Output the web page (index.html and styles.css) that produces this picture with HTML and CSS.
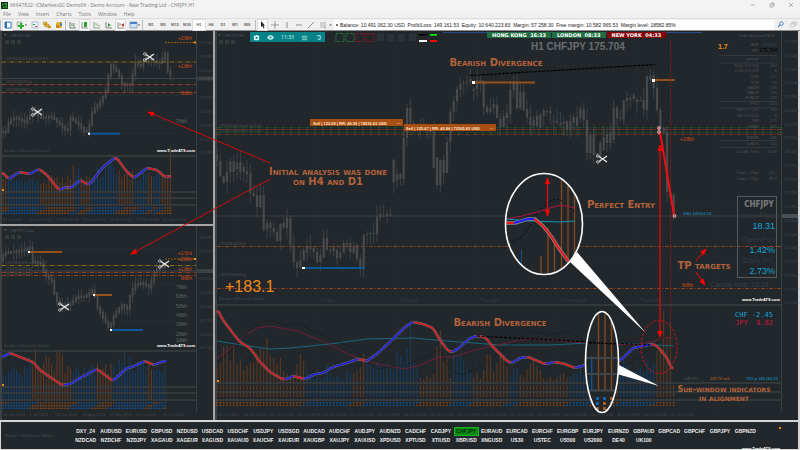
FILE: index.html
```html
<!DOCTYPE html>
<html lang="en">
	<head>
		<meta charset="utf-8">
		<title>66647822: ICMarketsSC-Demo06 - Demo Account</title>
		<link rel="stylesheet" href="styles.css">
	</head>
	<body>
		<header>
			<div class="titlebar">
				<svg class="logo" viewBox="0 0 8 8"><rect width="8" height="8" fill="#102a14"/><path d="M1 2h2v2H1zM4 1h3v2H4zM2 5h2v2H2zM5 4h2v3H5z" fill="#2fae3a"/></svg>
				<span class="title">66647822: ICMarketsSC-Demo06 - Demo Account - Raw Trading Ltd - CHFJPY,H1</span>
				<button aria-label="Minimize"><svg viewBox="0 0 6 6"><path d="M1 3h4"/></svg></button>
				<button aria-label="Restore"><svg viewBox="0 0 6 6"><path d="M1 2h3v3H1zM2 1h3v3"/></svg></button>
				<button aria-label="Close"><svg viewBox="0 0 6 6"><path d="M1 1l4 4M5 1L1 5"/></svg></button>
			</div>
			<nav class="menu">
				<button>File</button>
				<button>View</button>
				<button>Insert</button>
				<button>Charts</button>
				<button>Tools</button>
				<button>Window</button>
				<button>Help</button>
			</nav>
			<div class="toolbar">
				<div class="group icons">
					<button class="on" aria-label="Market watch"><svg viewBox="0 0 8 8"><path d="M1 1h6v6H1z" fill="#fff" stroke="#2c6fb5"/><path d="M1 1h2v6H1z" fill="#2c6fb5"/></svg></button>
					<button class="wide" aria-label="New chart"><svg viewBox="0 0 11 8"><path d="M1 1h5v4H1z" fill="#dfe9e0" stroke="#777" stroke-width=".5"/><path d="M2 4h2V2h2v2h2v2H6v2H4V6H2z" fill="#27b32e"/><path d="M9 3.500h2l-1 1.500z" fill="#333"/></svg></button>
					<button aria-label="Profiles"><svg viewBox="0 0 8 8"><path d="M1 1h6v6H1z" fill="#e8f3fb" stroke="#86aacb" stroke-width=".6"/><path d="M2 3h2v1H2z" fill="#2a9a36"/><path d="M4 5h2v1H4z" fill="#d44"/></svg></button>
					<button aria-label="Open folder"><svg viewBox="0 0 8 8"><path d="M0 1h4v3H0zM2 3h4v3H2zM5 5h3v2H5z" fill="#e0b23a" stroke="#a87c1c" stroke-width=".4"/></svg></button>
					<button aria-label="Terminal"><svg viewBox="0 0 8 8"><path d="M1 2l2-1h4v5L6 7H1z" fill="#e5a92c"/><path d="M1 4h3v3H1z" fill="#c8851c"/><path d="M5 2h2v3H5z" fill="#4a82c4"/></svg></button>
				</div>
				<div class="group icons">
					<button aria-label="Bars"><svg viewBox="0 0 8 8"><path d="M1 1v6h6M3 5V2M5 6V2" fill="none" stroke="#47704d" stroke-width=".8"/></svg></button>
					<button class="on" aria-label="Candles"><svg viewBox="0 0 8 8"><path d="M1 1v6h6" fill="none" stroke="#555" stroke-width=".7"/><path d="M3 1h3v5H3z" fill="#1fa52a"/></svg></button>
					<button aria-label="Line chart"><svg viewBox="0 0 8 8"><path d="M1 1v6h6M2 3c2-1 2 2 5 2" fill="none" stroke="#4b8a55" stroke-width=".7"/></svg></button>
					<button aria-label="Auto scroll"><svg viewBox="0 0 8 8"><path d="M1 1v6h6" fill="none" stroke="#555" stroke-width=".7"/><path d="M3 2l3 2-3 2z" fill="#35a040"/></svg></button>
					<button class="on" aria-label="Chart shift"><svg viewBox="0 0 8 8"><path d="M1 1v6h6M3 2v3" fill="none" stroke="#555" stroke-width=".7"/><path d="M7 2v4L4 4z" fill="#c0392b"/></svg></button>
					<button class="wide" aria-label="Template"><svg viewBox="0 0 11 8"><path d="M1 1h7v6H1z" fill="#cfe2f2" stroke="#5c88b0" stroke-width=".6"/><path d="M1 1h7v2H1z" fill="#4a82c4"/><path d="M9 3.500h2l-1 1.500z" fill="#333"/></svg></button>
				</div>
				<div class="group frames">
					<button>M1</button>
					<button>M5</button>
					<button>M15</button>
					<button>M30</button>
					<button class="on">H1</button>
					<button>H4</button>
					<button>D1</button>
					<button>W1</button>
					<button>MN</button>
				</div>
				<div class="group icons tools">
					<button class="on" aria-label="Cursor"><svg viewBox="0 0 8 8"><path d="M2 0l4 4.500H4.500l1 2.500-1 .5-1-2.500L2 6z" fill="#222"/></svg></button>
					<button aria-label="Crosshair"><svg viewBox="0 0 8 8"><path d="M4 0v8M0 4h8" stroke="#777" stroke-width=".7"/></svg></button>
					<button aria-label="Vertical line"><svg viewBox="0 0 8 8"><path d="M4 1v6" stroke="#777" stroke-width=".8"/></svg></button>
					<button aria-label="Horizontal line"><svg viewBox="0 0 8 8"><path d="M1 4h6" stroke="#777" stroke-width=".8"/></svg></button>
					<button aria-label="Trend line"><svg viewBox="0 0 8 8"><path d="M1 7l6-6" stroke="#777" stroke-width=".8"/></svg></button>
					<button aria-label="Fibonacci"><svg viewBox="0 0 8 8"><path d="M1 2h6M1 4h6M1 6h6M6 5v3" stroke="#999" stroke-width=".7"/></svg></button>
				</div>
				<div class="mark">×</div>
				<div class="account"><span class="dot"></span>Balance: 10 491 062.30 USD&nbsp; Profit/Loss: 149 161.53&nbsp; Equity: 10 640 223.83&nbsp; Margin: 57 258.30&nbsp; Free margin: 10 582 965.53&nbsp; Margin level: 18582.85%</div>
				<button class="end" aria-label="Search"><svg viewBox="0 0 8 8"><circle cx="5" cy="3" r="2" fill="none" stroke="#4373c4"/><path d="M3.500 4.500L1 7" stroke="#4373c4" stroke-width="1.200"/></svg></button>
				<button class="end" aria-label="Chat"><svg viewBox="0 0 10 8"><ellipse cx="6" cy="3" rx="3" ry="2" fill="#ddd" stroke="#aaa" stroke-width=".6"/><ellipse cx="4" cy="5" rx="3" ry="2" fill="#eee" stroke="#aaa" stroke-width=".6"/></svg></button>
			</div>
		</header>
		<main>
			<section class="pane h4"><svg id="h4" viewBox="0 31 213 193"></svg></section>
			<section class="pane d1"><svg id="d1" viewBox="0 226 213 194"></svg></section>
			<section class="pane h1">
				<svg id="h1" viewBox="215 31 585 389"></svg>
				<div class="recorder">
					<button aria-label="Camera"><svg viewBox="0 0 8 8"><path d="M1 2h2l.5-1h1.500L5.500 2H7v5H1z" fill="#dff"/><circle cx="4" cy="4.300" r="1.300" fill="#078286"/></svg></button>
					<button aria-label="Show"><svg viewBox="0 0 8 8"><path d="M0 4q4-5 8 0q-4 5-8 0z" fill="#dff"/><circle cx="4" cy="4" r="1.200" fill="#078286"/></svg></button>
					<span>11:33</span>
					<button aria-label="Menu"><svg viewBox="0 0 8 8"><path d="M1 2.500h6M1 4.500h6M1 6.500h6" stroke="#dff" stroke-width=".7"/></svg></button>
					<button aria-label="Dock"><svg viewBox="0 0 8 8"><path d="M2 2h4v4H3" fill="none" stroke="#dff" stroke-width=".9"/></svg></button>
				</div>
				<div class="sessions">
					<span>HONG KONG&nbsp; 16:33</span>
					<span>LONDON&nbsp; 08:33</span>
					<span class="closed">NEW YORK&nbsp; 04:33</span>
				</div>
			</section>
			<svg id="notes" viewBox="0 31 800 389"></svg>
		</main>
		<footer>
			<span class="maker">Beatle's Millionaire Maker</span>
			<div id="symbols"></div>
			<i class="led"></i>
			<a href="#">www.TradeATS.com</a>
		</footer>
		<script src="charts.js"></script>
	</body>
</html>
```
FILE: styles.css
```css
* {
	box-sizing: border-box;
}
body {
	display: flex;
	flex-direction: column;
	height: 100vh;
	margin: 0;
	overflow: hidden;
	background: #f0f0f0;
	color: #333;
	font: 5px "Open Sans", sans-serif;
}
button {
	padding: 0;
	border: 0;
	background: none;
	color: inherit;
	font: inherit;
}
svg {
	display: block;
}

/* window header */
header {
	flex: none;
	height: 31px;
	border-bottom: 1px solid #8c8c8c;
}
.titlebar {
	display: flex;
	align-items: center;
	height: 10px;
	padding: 0 0 0 1px;
	background: #f3f3f3;
	color: #777;
}
.logo {
	width: 7px;
	height: 7px;
	margin-right: 2px;
}
.title {
	flex: 1;
}
.titlebar button {
	width: 19px;
}
.titlebar button svg {
	width: 6px;
	margin: auto;
	fill: none;
	stroke: #888;
	stroke-width: 0.6;
}
.menu {
	display: flex;
	gap: 7px;
	height: 8px;
	padding-left: 3px;
	color: #777;
}
.toolbar {
	display: flex;
	align-items: center;
	height: 12px;
	border-top: 1px solid #ddd;
}
.group {
	display: flex;
	flex: none;
	align-items: center;
	height: 10px;
	padding: 0 2px;
	border-left: 1px solid #bbb;
}
.icons {
	gap: 3px;
}
.icons button {
	width: 9px;
	height: 10px;
}
.icons .wide {
	width: 12px;
}
.icons svg {
	height: 8px;
	margin: auto;
}
.toolbar .on {
	background: #fff;
	outline: 1px solid #dcdcdc;
}
.frames button {
	width: 12px;
	height: 10px;
	color: #666;
	font: bold 4px "Liberation Sans", sans-serif;
}
.tools {
	gap: 3px;
}
.mark {
	flex: none;
	width: 5px;
}
.account {
	flex: 1;
	min-width: 0;
	height: 10px;
	padding-left: 2px;
	overflow: hidden;
	background: #fff;
	color: #222;
	font: 5px/10px "Liberation Sans", sans-serif;
	white-space: nowrap;
}
.dot {
	display: inline-block;
	width: 2px;
	height: 2px;
	margin: 0 2px 1px 0;
	background: #777;
}
.end {
	flex: none;
	width: 13px;
}
.end svg {
	height: 7px;
	margin: auto;
}

/* charts */
main {
	position: relative;
	display: grid;
	flex: 1;
	grid-template-columns: 213fr 585fr;
	grid-template-rows: 193fr 194fr;
	gap: 2px;
	min-height: 0;
	background: #a5a5a5;
}
.pane {
	position: relative;
	min-height: 0;
	background: #22272b;
	border-left: 2px solid #3d4144;
}
.pane > svg {
	width: calc(100% + 2px);
	height: 100%;
	margin-left: -2px;
}
.h1 {
	grid-column: 2;
	grid-row: 1 / 3;
	border-right: 2px solid #d5d5d5;
}
.h1 > svg {
	width: calc(100% + 4px);
}
#notes {
	position: absolute;
	inset: 0;
	width: 100%;
	height: 100%;
	pointer-events: none;
}
main text {
	font-family: "Liberation Sans", sans-serif;
}
.recorder {
	position: absolute;
	top: 1px;
	left: 33px;
	display: flex;
	align-items: center;
	justify-content: space-around;
	width: 75px;
	height: 10px;
	background: #078286;
	color: #dff;
}
.recorder svg {
	width: 7px;
}
.sessions {
	position: absolute;
	top: 1px;
	left: 270px;
	display: flex;
	gap: 1px;
	color: #fff;
	font: bold 5px/6px "DejaVu Sans", sans-serif;
	text-align: center;
}
.sessions span {
	padding: 0 5px;
	background: #1f6f42;
}
.sessions .closed {
	background: #850006;
}
.dim {
	fill: #505458;
	font-size: 4px;
}
.faint {
	fill: #44494d;
	font-size: 4px;
}
.hot {
	fill: #d24a1c;
	font-size: 5px;
}
.callout {
	fill: #b3623b;
	font-size: 10px;
	font-weight: bold;
	font-variant: small-caps;
}
main .callout {
	font-family: "DejaVu Sans", sans-serif;
}
.callout.small {
	font-size: 8px;
}
.watermark {
	fill: #fff;
	font-size: 4px;
	font-weight: bold;
}
.middle {
	text-anchor: middle;
}
.right {
	text-anchor: end;
}
.heading {
	fill: #6a6d70;
	font-size: 10px;
	font-weight: bold;
}
.order {
	fill: #ffe8d0;
	font-size: 4px;
	font-weight: bold;
}
.pips {
	fill: #f28c13;
	font-size: 16px;
}
.spread {
	fill: #f28c13;
	font-size: 7px;
	font-weight: bold;
}
.pair {
	fill: #7c7f82;
	font-size: 8px;
	font-weight: bold;
}
main .pair {
	font-family: "Liberation Sans Narrow", "DejaVu Sans Condensed", sans-serif;
}
.cyan {
	fill: #12a5dc;
	font-size: 4px;
}
.digits {
	fill: #12a5dc;
	font-size: 9px;
}
main .mono {
	font-family: "DejaVu Sans Mono", monospace;
	font-size: 7px;
}

/* symbol list */
footer {
	position: relative;
	display: flex;
	flex: none;
	align-items: center;
	height: 30px;
	border: solid #d5d5d5;
	border-width: 2px 2px 1px 1px;
	background: #22272b;
	color: #eee;
}
.maker {
	width: 72px;
	padding-left: 4px;
	color: #3d4246;
	font: bold 4px "Liberation Sans", sans-serif;
}
#symbols {
	display: grid;
	grid-template-columns: repeat(27, 1fr);
	flex: 1;
	row-gap: 0;
	margin-right: 40px;
}
#symbols button {
	height: 9px;
	font: bold 5px "Liberation Sans", sans-serif;
}
#symbols .current {
	background: #0a8a12;
	outline: 1px solid #12b41c;
	outline-offset: -1px;
	color: #052a08;
}
.led {
	position: absolute;
	top: 5px;
	right: 17px;
	width: 2px;
	height: 2px;
	background: #f28c13;
}
footer a {
	position: absolute;
	right: 18px;
	bottom: -2px;
	color: #fff;
	font: bold 4px "Liberation Sans", sans-serif;
	text-decoration: none;
}
```
FILE: charts.js
```js
const UP = '#123f6b', DOWN = '#653a1e', BACK = '#22272b';

function rnd(n) {
	const v = Math.sin(n * 127.1 + 11.7) * 43758.5453;
	return v - Math.floor(v);
}
function line(x1, y1, x2, y2, color, width = 1, extra = '') {
	return `<line x1="${x1}" y1="${y1}" x2="${x2}" y2="${y2}" stroke="${color}" stroke-width="${width}" ${extra}/>`;
}
function rect(x, y, w, h, fill, extra = '') {
	return `<rect x="${x}" y="${y}" width="${w}" height="${h}" fill="${fill}" ${extra}/>`;
}
function text(x, y, str, cls) {
	return `<text x="${x}" y="${y}" class="${cls}">${str}</text>`;
}
function poly(points, color, width = 1, extra = '') {
	return `<polyline points="${points.join(' ')}" fill="none" stroke="${color}" stroke-width="${width}" stroke-linejoin="round" ${extra}/>`;
}
function at(points, x) {
	for (let i = 1; i < points.length; i++) {
		const [ax, ay] = points[i - 1], [bx, by] = points[i];
		if (x <= bx) return ay + (by - ay) * (x - ax) / (bx - ax);
	}
	return points[points.length - 1][1];
}
function candle(x, top, bottom, i, w, wick) {
	return line(x, top - rnd(i) * wick, x, bottom + rnd(i + 500) * wick, '#44484b', 0.8) +
		rect(x - w / 2, top, w, Math.max(1, bottom - top), '#484a4c');
}
// blue while the average rises, red while it falls
function average(points) {
	const curve = [];
	for (let x = points[0][0]; x < points[points.length - 1][0]; x += 1) curve.push([x, at(points, x)]);
	const smooth = curve.map((p, i) => {
		const near = curve.slice(Math.max(0, i - 2), i + 3);
		return [p[0], near.reduce((s, q) => s + q[1], 0) / near.length];
	});
	let out = poly(smooth, '#6c6c6c', 2.6);
	for (let i = 1; i < smooth.length; i++) {
		const up = smooth[i][1] < smooth[i - 1][1];
		out += line(...smooth[i - 1], ...smooth[i], up ? '#2222e0' : '#d41c20', 1.4, 'stroke-linecap="round"');
	}
	return out;
}
function isUp(runs, x) {
	return runs.some(([a, b]) => x >= a && x <= b);
}
function rows(y, end, step, runs, start) {
	let out = '';
	for (let x = start, i = 0; x <= end; x += step, i++) {
		const c = isUp(runs, x) ? UP : DOWN;
		out += rect(x - 0.5, y + 1, 1, 5, c) + rect(x - 0.5, y + 7, 1, 6, c);
		[16, 18.7, 21.3].forEach((dy, k) => {
			const up = isUp(runs, x + k * 4 - 4);
			out += rect(x - 0.8, y + dy - 0.7, 1.6, 1.4, up ? '#0f559c' : '#8c4a18');
		});
	}
	return out;
}
function scissors(x, y, s = 1) {
	return `<g transform="translate(${x} ${y}) scale(${s})" fill="none" stroke="#eee" stroke-width="1.2"><path d="M-3 -2.500L5 3M-3 2.500L5 -3"/><circle cx="-4.200" cy="-3" r="1.300" stroke-width=".7"/><circle cx="-4.200" cy="3" r="1.300" stroke-width=".7"/></g>`;
}
const DASH = 'stroke-dasharray="4 1.500 1 1.500"';

function smallChart(o) {
	const t = o.top;
	let s = '';
	s += text(9, t + 6, o.name, 'dim') + '<path d="M4 ' + (t + 3) + 'h3l-1.500 2z" fill="#555"/>';
	[5, 11, 17].forEach(x => s += rect(x, t + 9, 4, 4, '#34393c'));
	s += line(2, o.bid, 196, o.bid, '#3c4144');
	o.dotted.forEach(([x, y]) => s += line(x, y, 176, y, '#343a3e', 0.7, 'stroke-dasharray="1 1"'));
	for (let x = 3, i = 0; x <= o.end; x += 2.7, i++) {
		const a = at(o.path, x), b = at(o.path, x + 2.7);
		s += candle(x, Math.min(a, b) - 1.5, Math.max(a, b) + 1, i, 1.8, 7);
	}
	s += line(2, o.yellow, 196, o.yellow, '#96700b', 1, DASH);
	o.orange.forEach(y => s += line(2, y, 196, y, '#94401d', 1, DASH));
	s += line(165, o.target, 195, o.target, '#a8640d', 0.8, 'stroke-dasharray="2 1"') + rect(194, o.target - 1, 2, 2, '#f28c13');
	o.orders.forEach(([y, str]) => s += text(5, y, str, 'dim'));
	o.hot.forEach(([y, str]) => s += text(192, y, str, 'hot right'));
	o.cool.forEach(([y, str]) => s += `<text x="187" y="${y}" class="right" fill="#63676a" font-size="5">${str}</text>`);
	o.marks.forEach(([x1, x2, y, c]) => s += rect(x1, y - 1, x2 - x1, 2, c) + rect(x1 - 1, y - 1, 2, 2, '#fff'));
	s += text(4, o.split - 4, "Beatle's Millionaire Maker", 'faint') + text(195, o.split - 4, 'www.TradeATS.com', 'watermark right');
	for (let x = 3, i = 0; x <= o.end; x += 2.7, i++) {
		const h = at(o.volume, x) * (0.45 + rnd(i + o.top) * 0.65);
		s += rect(x - 0.5, o.base - h, 1, h, isUp(o.up, x) ? UP : DOWN);
	}
	s += rows(o.base, o.end, 2.7, o.up, 3);
	[o.split, o.base, o.base + 6, o.base + 13].forEach(y => s += line(2, y, 197, y, '#3a3f42', 1.4));
	s += average(o.average);
	s += line(196.500, t, 196.500, o.base + 25, '#3a3f42');
	o.prices.forEach((p, i) => s += text(199, t + 13 + i * 13.8, p, 'faint'));
	s += rect(197, o.bid - 2, 16, 4, '#383d40') + text(199, o.bid + 1.500, '175.704', 'dim');
	o.dates.forEach((d, i) => s += text(3 + i * 26.6, o.base + 29, d, 'faint'));
	s += rect(2, o.base - 3, 2, 2, '#f28c13');
	return s;
}

document.getElementById('h4').innerHTML = smallChart({
	name: 'CHFJPY,H4', top: 31, split: 156, base: 192, end: 171, bid: 78.5, yellow: 62, orange: [84.5, 92.5], target: 42.5,
	path: [[3, 132], [8, 133], [12, 120], [20, 118], [27, 123], [35, 112], [43, 118], [55, 117], [63, 125], [70, 132], [73, 118], [80, 123], [87, 132], [91, 130], [95, 112], [103, 102], [108, 93], [113, 65], [120, 72], [125, 85], [133, 85], [138, 63], [143, 67], [148, 58], [157, 62], [163, 63], [168, 53], [171, 76]],
	dotted: [[110, 95], [100, 116], [92, 120], [90, 133]],
	orders: [[60, '#257024223 sell 122.67'], [83, '#257024223 tp'], [91, '#257024584 tp']],
	hot: [[40, '+2/8th'], [68, '+1/8th'], [95, '8/8th']], cool: [[123, '7/8th']],
	marks: [[89, 120, 133.7, '#0f559c']],
	volume: [[3, 20], [20, 17], [60, 15], [75, 26], [90, 18], [100, 30], [111, 38], [120, 25], [130, 20], [147, 22], [168, 18], [170, 50], [172, 50]],
	up: [[6, 40], [74, 81], [90, 118], [135, 148], [153, 160]],
	average: [[2, 172], [9, 179], [19, 172], [30, 174], [39, 169], [47, 175], [59, 190], [66, 187], [71, 188], [80, 180], [89, 185], [103, 167], [116, 157], [127, 172], [134, 178], [147, 168], [157, 170], [165, 177], [168, 176], [172, 177]],
	prices: ['177.647', '176.887', '176.107', '', '174.567', '173.787', '173.027', '172.247', '171.487'],
	dates: ['8 Oct 2024', '11 Oct 04:00', '15 Oct 20:00', '18 Oct 12:00', '23 Oct 04:00', '25 Oct 20:00', '30 Oct 12:00']
});
document.getElementById('d1').innerHTML = smallChart({
	name: 'CHFJPY,Daily', top: 226, split: 351, base: 387, end: 167, bid: 271, yellow: 265.5, orange: [272.5, 275.5], target: 259,
	path: [[2, 262], [7, 253], [17, 252], [25, 251], [33, 248], [35, 262], [43, 264], [48, 275], [55, 282], [58, 300], [63, 305], [72, 305], [80, 297], [88, 297], [96, 290], [100, 308], [108, 322], [112, 329], [117, 315], [125, 305], [131, 310], [133, 293], [138, 285], [145, 283], [152, 288], [157, 272], [163, 267], [167, 267]],
	dotted: [[35, 249], [140, 284], [112, 322]],
	orders: [[264, '#257024223 sell 122.67'], [270, '#257024223 tp'], [275, '#257024584 tp']],
	hot: [[255, '+1/3rd'], [261, '+2/8th'], [271, '+1/8th'], [280, '8/8th']],
	cool: [[289, '7/8th'], [298, '6/8th'], [308, '5/8th'], [317, '4/8th'], [326, '3/8th'], [336, '2/8th'], [342, '1/8th']],
	marks: [[29, 62, 252, '#96501b'], [94, 112, 295, '#96501b'], [111, 143, 330, '#0f559c']],
	volume: [[3, 18], [20, 18], [36, 35], [50, 32], [57, 42], [75, 18], [90, 24], [112, 28], [130, 36], [145, 24], [167, 28]],
	up: [[2, 32], [72, 96], [112, 148], [154, 168]],
	average: [[2, 357], [10, 353], [20, 357], [33, 362], [40, 370], [50, 377], [62, 385], [70, 384], [80, 378], [97, 369], [105, 375], [113, 381], [127, 368], [132, 367], [145, 361], [154, 365], [161, 362], [165, 361], [167, 362]],
	prices: ['180.995', '178.725', '', '174.105', '171.765', '169.425', '167.155', '164.815', '162.505'],
	dates: ['14 Jun 2024', '9 Jul 2024', '30 Jul 2024', '21 Aug 2024', '12 Sep 2024', '4 Oct 2024', '28 Oct 2024']
});

// H1: body top and bottom of each candle, 3 bars per 10 units
const bodies = [143, 156, 155, 161, 161, 176, 176, 183, 172, 182, 161, 172, 161, 172, 163, 169, 162, 172, 167, 172, 171, 174, 173, 193, 193, 196, 195, 207, 195, 207, 195, 230, 223, 229, 223, 228, 228, 232, 232, 241, 224, 241, 223, 228, 218, 228, 218, 245, 245, 262, 262, 268, 260, 267, 250, 260, 247, 253, 247, 249, 248, 252, 252, 262, 255, 262, 238, 257, 238, 250, 250, 251, 247, 251, 250, 258, 253, 258, 243, 253, 243, 245, 243, 252, 247, 253, 245, 259, 259, 267, 235, 267, 234, 235, 233, 234, 233, 234, 217, 234, 214, 217, 214, 215, 214, 216, 214, 216, 160, 182, 174, 180, 174, 179, 138, 179, 108, 138, 108, 123, 123, 128, 126, 128, 126, 130, 124, 128, 127, 130, 130, 132, 130, 168, 157, 185, 160, 185, 160, 173, 142, 173, 112, 142, 101, 112, 89, 101, 84, 89, 83, 84, 82, 83, 79, 82, 89, 91, 80, 89, 80, 82, 81, 107, 107, 112, 108, 112, 104, 108, 105, 118, 119, 127, 116, 127, 113, 118, 90, 114, 83, 90, 83, 108, 92, 108, 92, 110, 109, 117, 117, 125, 120, 126, 116, 126, 115, 128, 110, 116, 111, 112, 111, 113, 121, 122, 121, 123, 123, 125, 122, 124, 121, 130, 121, 130, 117, 123, 117, 126, 108, 118, 109, 120, 120, 153, 135, 153, 135, 155, 153, 157, 143, 157, 137, 150, 134, 143, 133, 143, 108, 140, 108, 118, 118, 119, 100, 119, 98, 101, 98, 100, 95, 99, 100, 102, 100, 101, 100, 109, 76, 110, 76, 80, 75, 88, 88, 110, 110, 128, 128, 133, 132, 192, 192, 197, 195, 215];
const volumes = [15, 20, 37, 38, 22, 36, 19, 24, 13, 17, 21, 20, 30, 34, 32, 45, 28, 25, 20, 25, 12, 9, 7, 9, 19, 29, 22, 14, 8, 5, 8, 4, 6, 20, 9, 6, 8, 4, 3, 12, 11, 10, 12, 16, 29, 22, 19, 14, 21, 17, 14, 20, 18, 12, 31, 28, 20, 36, 60, 21, 15, 5, 3, 8, 5, 9, 36, 53, 22, 24, 5, 28, 28, 28, 22, 14, 10, 6, 10, 4, 13, 29, 28, 12, 20, 32, 28, 16, 6, 14, 15, 8, 6, 14, 20, 25, 17, 13, 5, 3, 6, 3, 5, 8, 10, 6, 7, 10, 9, 16, 8, 20, 20, 20, 20, 20, 20, 20, 20, 20, 20, 18, 25, 20, 13, 12, 13, 15, 12, 24, 15, 20, 32, 35, 72, 45, 60];
const rising = [[306, 352], [366, 419], [451, 472], [507, 518], [568, 593], [619, 654]];
const first = 673.7 - (bodies.length / 2 - 1) * 3.3333;
let s = '';
[237, 317, 397, 477, 557, 637, 717].forEach(x => s += line(x, 40, x, 411, '#30363a', 0.8, 'stroke-dasharray="1 2"'));
[201, 257, 300].forEach(y => s += line(217, y, 781, y, '#2c3135', 0.8, 'stroke-dasharray="1 2"'));
s += line(217, 216, 781, 216, '#3c4144');
[127.5, 132.5].forEach(y => s += line(217, y, 781, y, '#1c5a2a', 0.8, DASH));
[129.5, 134.5].forEach(y => s += line(217, y, 781, y, '#8c401d', 0.8, DASH));
[246.5, 288.5].forEach(y => s += line(217, y, 781, y, '#94401d', 1, DASH));
for (let i = 0; i < bodies.length / 2; i++) {
	const x = first + i * 3.3333;
	if (x > 216) s += candle(x, bodies[i * 2], bodies[i * 2 + 1], i, 2.2, 12);
}
s += text(223, 37, 'CHFJPY,H1', 'dim') + '<path d="M218 34h3l-1.500 2z" fill="#555"/>';
[219, 225, 231].forEach(x => s += rect(x, 40, 4, 4, '#34393c'));
s += text(219, 127, '#257024223 sell 122.09', 'dim') + text(219, 132, '#257024584 sell 125.67', 'dim');
s += text(219, 245, '#257024223 tp', 'dim') + text(219, 276, '#257024584 tp', 'dim');
s += text(219, 300, "Beatle's Millionaire Maker", 'faint') + text(225, 292, '+183.1', 'pips');
[[320, 'Friday'], [400, 'Monday'], [480, 'Tuesday'], [560, 'Wednesday'], [640, 'Thursday']].forEach(([x, d]) => s += `<text x="${x}" y="302" fill="#383d41" font-size="5">${d}</text>`);
[['#1f6f35', 336], ['#1f6f35', 346], ['#7c1a20', 356], ['#7c1a20', 366]].forEach(([c, x]) => s += rect(x, 33.5, 8, 8, 'none', `stroke="${c}" stroke-dasharray="3 1"`));
[377, 387, 398, 409].forEach(x => s += rect(x, 34, 7, 7, '#2d3236'));
s += rect(419, 34, 8, 1.600, '#000') + rect(430, 34, 7, 1.600, '#0f0') + rect(419, 40, 8, 2, '#fff') + rect(430, 40, 7, 2, '#f00');
s += line(443, 32.5, 702, 32.5, '#2b4a8c', 1.2) + text(531, 50, 'H1 CHFJPY 175.704', 'heading') + text(718, 49, '1.7', 'spread');
s += rect(473, 81.5, 62, 2, '#96501b') + rect(472, 81, 3, 3, '#fff') + rect(653, 79, 22, 2, '#96501b') + rect(652, 79, 3, 3, '#fff');
s += rect(303, 267, 62, 2, '#0f559c') + rect(302, 267, 3, 2, '#fff');
s += line(670.5, 40, 670.5, 345, '#a31218', 1, 'stroke-dasharray="1.500 1.500"');
s += text(680, 141, '+1/8th', 'hot') + text(682, 287, '6/8th', 'hot') + '<text x="683" y="215" class="cyan">USD 149161.53</text>';

// trade assistant column
s += text(738, 37, 'Trade Assistant MT4', 'dim');
[['ASK', '175.721', 46], ['BID', '175.704', 52], ['spread:', '1.7', 60], ['HOD:177.331', '162', 67], ['LOD:175.625', '8', 72], ['TDR', '171', 78], ['YDR', '85', 84], ['WADR', '135', 89], ['MADR', '119', 94], ['HYADR', '133', 99], ['PTO', '-124', 105], ['WH:177.331', '162', 111], ['WL:175.625', '8', 117], ['WR', '171', 122], ['MWR', '331', 128], ['SMWR', '339', 139], ['3xADR', '320', 145], ['Candle Time', '26:28', 153], ['Trade 1 Pips', '94.1', 174], ['Trade 2 Pips', '89.8', 180]].forEach(([a, b, y], i) => {
	s += text(759, y, a, 'dim right') + (i === 1 ? `<text x="777" y="${y}" class="right" font-size="5" fill="#000">${b}</text>` : text(777, y, b, 'dim right'));
});
[55.5, 63, 101.5, 108, 140.5, 147.5].forEach(y => s += line(720, y, 777, y, '#383d41', 0.8));
s += rect(737.5, 196.5, 39, 81, 'none', 'stroke="#555a5d"');
s += text(759, 207, 'CHFJPY', 'pair middle');
[['OpenPips', '18.31', 218], ['OpenPos', '1.42%', 242], ['Daily P/L', '2.73%', 263]].forEach(([a, b, y]) => {
	s += `<text x="775" y="${y}" class="right" fill="#33393d" font-size="8">${a}</text>` + text(775, y + 11, b, 'digits right');
});
s += '<text x="710" y="287" fill="#3a4044" font-size="7">Candle time: 26:28</text>' + text(780, 301, 'www.TradeATS.com', 'watermark right');
for (let i = 0, p = 177.595; i < 20; i++, p -= 0.149) s += text(784, 43 + i * 13.75, p.toFixed(3), 'faint');
s += rect(782, 214, 16, 4, '#4a4f52') + text(784, 217.5, '175.704', 'dim') + line(781.5, 31, 781.5, 411, '#3a3f42');

// indicator window
volumes.forEach((h, i) => {
	const x = 217 + i * 3.3333;
	if (x < 675) s += rect(x - 0.5, 383 - h, 1, h, isUp(rising, x) ? UP : DOWN);
});
s += rows(384, 674, 3.3333, rising, 217);
[305, 383, 392, 400].forEach(y => s += line(217, y, 781, y, '#3a3f42', 1.5));
s += poly([[217, 341], [235, 344], [270, 349], [290, 348], [330, 344], [367, 339], [413, 338], [435, 340], [460, 342], [500, 345], [550, 345], [590, 343], [640, 344], [673, 346]], '#18687b');
s += poly([[217, 359], [232, 347], [247, 334], [257, 328], [270, 326], [297, 331], [315, 338], [333, 346], [350, 355], [373, 363], [405, 369], [417, 366], [440, 357], [453, 357], [475, 350], [502, 344], [527, 339], [553, 340], [585, 343], [635, 345], [655, 341], [668, 337], [673, 338]], '#6d1f35');
s += poly([[217, 362], [237, 346], [253, 325], [270, 320], [285, 325], [300, 324], [315, 332], [333, 340], [350, 346], [365, 359], [378, 369], [405, 365], [425, 357], [440, 349], [450, 370], [462, 375], [475, 370], [500, 352], [520, 340], [532, 331], [548, 335], [568, 331], [585, 342], [625, 366], [645, 353], [665, 336]], '#11151a', 0.8, 'stroke-dasharray="1.500 1.500"');
s += average([[217, 309], [223, 320], [232, 332], [240, 342], [250, 348], [260, 362], [270, 372], [282, 379], [287, 379], [293, 376], [305, 379], [315, 374], [323, 373], [333, 367], [347, 363], [358, 359], [367, 361], [378, 353], [392, 340], [405, 327], [413, 322], [423, 324], [433, 328], [440, 340], [448, 351], [453, 352], [460, 347], [470, 338], [477, 336], [485, 337], [493, 347], [507, 361], [512, 363], [520, 358], [528, 357], [545, 364], [555, 362], [565, 364], [575, 368], [585, 365], [605, 366], [622, 359], [633, 348], [653, 344], [658, 347], [667, 358], [674, 373]]);
s += text(735, 317, 'CHF -2.45', 'cyan mono') + '<text x="735" y="325" class="mono" fill="#c4183c" xml:space="preserve">JPY  9.82</text>';
s += text(683, 380, 'CHFJPY', 'dim') + '<text x="710" y="380" font-size="4" fill="#c46724">247.76 sell</text>' + text(778, 380, '915 p 149,161.53', 'cyan right');
['23 Oct 2024', '24 Oct 02:00', '24 Oct 10:00', '24 Oct 18:00', '25 Oct 02:00', '25 Oct 10:00', '25 Oct 18:00', '28 Oct 02:00', '28 Oct 10:00', '28 Oct 18:00', '29 Oct 02:00', '29 Oct 10:00', '29 Oct 18:00', '30 Oct 02:00', '30 Oct 10:00', '30 Oct 18:00', '31 Oct 02:00', '31 Oct 10:00'].forEach((d, i) => s += text(217 + i * 26.67, 416, d, 'faint'));
s += rect(217, 380, 2, 2, '#f28c13');
document.getElementById('h1').innerHTML = s;

// annotations over all three charts
let n = '<defs><marker id="tip" viewBox="0 0 8 6" refX="7" refY="3" markerWidth="7" markerHeight="6" markerUnits="userSpaceOnUse" orient="auto-start-reverse"><path d="M0 0l8 3-8 3z" fill="#f00"/></marker><clipPath id="lens"><ellipse cx="544" cy="224" rx="38" ry="50"/></clipPath><clipPath id="slot"><ellipse cx="602" cy="362" rx="16" ry="50"/></clipPath></defs>';
n += line(270, 163, 148, 112, '#d00a0e', 1, 'marker-end="url(#tip)"') + line(270, 179, 131, 254, '#d00a0e', 1, 'marker-end="url(#tip)"');
n += scissors(149, 57) + scissors(37, 112) + scissors(64, 307) + scissors(164, 264) + scissors(602, 159);
n += rect(310, 119, 93, 7, '#a94f14') + text(313, 124.500, 'Sell | 122.09 | RR: 46.39 | 74536.63 USD', 'order') + text(397, 124, '...', 'order');
n += rect(404, 124, 92, 7, '#a94f14') + text(406, 129.500, 'Sell | 125.67 | RR: 43.84 | 72505.83 USD', 'order') + text(490, 129, '...', 'order');
n += line(470, 75.5, 655, 64.5, '#000', 1.2, 'stroke-dasharray="3 1"') + line(477, 336, 650, 345, '#000', 1.2, 'stroke-dasharray="3 1.500"');
n += '<path d="M577 252l-7 10 76 71zM617 364v10l42 12z" fill="#fff"/>';
n += '<ellipse cx="544" cy="224" rx="38.500" ry="50.500" fill="' + BACK + '"/><g clip-path="url(#lens)">';
n += rect(521, 250, 1, 30, '#0f559c');
[[541, 256], [548, 228], [554.5, 240], [561.500, 180], [568, 180], [574.500, 190]].forEach(([x, y]) => n += rect(x - 0.7, y, 1.400, 100, '#84481b'));
n += poly([[513, 242], [522, 237], [530, 226], [536, 214], [545, 205], [553, 199], [561, 200], [568, 207], [575, 212]], '#090c10', 1, 'stroke-dasharray="2 2"');
n += poly([[506, 219], [522, 216], [537, 212], [550, 208], [561, 205], [575, 208]], '#b0163f') + poly([[506, 219], [530, 221], [560, 222], [575, 221]], '#1597bb');
n += poly([[506, 223], [515, 223], [528, 219], [535, 219], [543, 226], [551, 236], [560, 250], [569, 262]], '#888', 3.5);
n += poly([[506, 223], [514, 223]], '#e8171a', 2) + poly([[514, 223], [528, 219], [534, 219]], '#1b1bff', 2) + poly([[534, 219], [543, 226], [551, 236], [560, 250], [569, 262]], '#f11216', 2);
n += '</g><ellipse cx="544" cy="224" rx="38.500" ry="50.500" fill="none" stroke="#fff" stroke-width="1.600"/>';
n += line(547.5, 178, 547.5, 216, '#f00', 1.2, 'marker-start="url(#tip)" marker-end="url(#tip)"');
n += '<ellipse cx="602" cy="362" rx="16.500" ry="50.500" fill="' + BACK + '"/><g clip-path="url(#slot)">';
n += rect(591, 356, 1.400, 34, '#0f559c');
[598.500, 605, 611.500].forEach(x => n += rect(x - 0.7, 312, 1.400, 78, '#84481b'));
[358, 374, 390.500].forEach(y => n += line(585, y, 620, y, '#414649', 2));
[[597, 398, 1], [604, 398, 1], [611, 398, 0], [597, 403, 1], [604, 403, 0], [611, 403, 0], [597, 408, 0], [604, 408, 0]].forEach(([x, y, b]) => n += rect(x - 1, y - 1, 3, 3, b ? '#1668b4' : '#b4601c', 'rx="1"'));
n += line(585, 342.5, 620, 344, '#000', 1.2, 'stroke-dasharray="3 1"') + '</g><ellipse cx="602" cy="362" rx="16.500" ry="50.500" fill="none" stroke="#fff" stroke-width="1.600"/>';
n += '<ellipse cx="659" cy="347" rx="18" ry="26.500" fill="none" stroke="#c4141a" stroke-dasharray="3 1.500"/>';
n += line(660, 145, 660, 337, '#d00a0e', 1.4, 'marker-start="url(#tip)" marker-end="url(#tip)"') + line(660, 132, 674, 215, '#f30d12', 2);
[[659, 128], [659, 132], [674.500, 216]].forEach(([x, y]) => n += `<circle cx="${x}" cy="${y}" r="1.400" fill="#c22" stroke="#ddd" stroke-width=".8"/>`);
n += line(696, 261, 706, 249, '#f00', 1, 'marker-end="url(#tip)"') + line(696, 272, 705, 285, '#f00', 1, 'marker-end="url(#tip)"');
n += text(328, 175, 'Initial analysis was done', 'callout middle') + text(328, 185, 'on H4 and D1', 'callout middle');
n += text(496, 66, 'Bearish Divergence', 'callout middle') + text(500, 326, 'Bearish Divergence', 'callout middle');
n += text(621, 208, 'Perfect Entry', 'callout middle') + text(704, 269, 'TP targets', 'callout middle');
n += text(724, 392, 'Sub-window indicators', 'callout small middle') + text(724, 401, 'in alignment', 'callout small middle');
document.getElementById('notes').innerHTML = n;

const symbols = [
	'DXY_Z4 AUDUSD EURUSD GBPUSD NZDUSD USDCAD USDCHF USDJPY USDSGD AUDCAD AUDCHF AUDJPY AUDNZD CADCHF CADJPY CHFJPY EURAUD EURCAD EURCHF EURGBP EURJPY EURNZD GBPAUD GBPCAD GBPCHF GBPJPY GBPNZD',
	'NZDCAD NZDCHF NZDJPY XAGAUD XAGEUR XAGUSD XAUAUD XAUCHF XAUEUR XAUGBP XAUJPY XAUUSD XPDUSD XPTUSD XTIUSD XBRUSD XNGUSD US30 USTEC US500 US2000 DE40 UK100'
].join(' ').split(' ');
document.getElementById('symbols').innerHTML = symbols.map(name => `<button${name === 'CHFJPY' ? ' class="current"' : ''}>${name}</button>`).join('');
```
